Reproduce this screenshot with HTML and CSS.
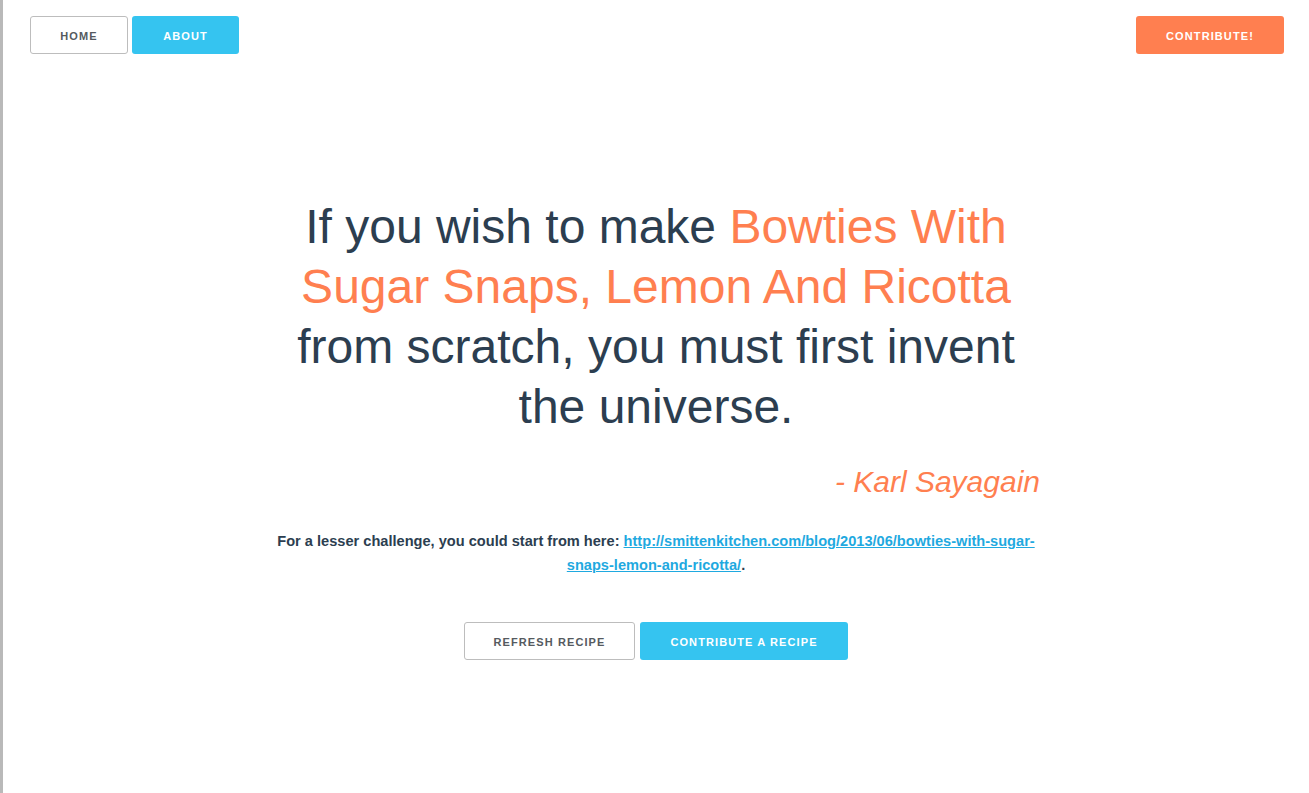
FILE: index.html
```html
<!DOCTYPE html>
<html>
<head>
<meta charset="utf-8">
<link rel="stylesheet" href="styles.css">
</head>
<body>
<nav class="nav">
  <div class="nav-left">
    <a class="btn btn-outline" href="#">Home</a>
    <a class="btn btn-blue" href="#">About</a>
  </div>
  <a class="btn btn-orange btn-contribute" href="#">Contribute!</a>
</nav>
<main class="main">
  <h1 class="quote">If you wish to make <span class="dish">Bowties With Sugar Snaps, Lemon And Ricotta</span> from scratch, you must first invent the universe.</h1>
  <p class="author">- Karl Sayagain</p>
  <p class="lesser">For a lesser challenge, you could start from here: <a href="#">http://smittenkitchen.com/blog/2013/06/bowties-with-sugar-snaps-lemon-and-ricotta/</a>.</p>
  <div class="actions">
    <a class="btn btn-outline btn-refresh" href="#">Refresh recipe</a>
    <a class="btn btn-blue btn-recipe" href="#">Contribute a recipe</a>
  </div>
</main>
</body>
</html>
```
FILE: styles.css
```css
html, body {
  margin: 0;
  padding: 0;
  height: 100%;
}
body {
  background: #fff;
  border-left: 3px solid #b9b9b9;
  box-sizing: border-box;
  font-family: "Liberation Sans", Arial, sans-serif;
  color: #2c3e50;
}
.nav {
  display: flex;
  justify-content: space-between;
  align-items: flex-start;
  padding: 16px 25px 0 27px;
}
.nav-left {
  display: flex;
  gap: 4px;
}
.btn {
  display: inline-flex;
  align-items: center;
  justify-content: center;
  box-sizing: border-box;
  height: 38px;
  padding-top: 2px;
  border-radius: 3px;
  font-size: 11px;
  font-weight: bold;
  letter-spacing: 1.1px;
  text-transform: uppercase;
  text-decoration: none;
}
.btn-outline {
  border: 1px solid #bdbdbd;
  color: #555a60;
  background: #fff;
}
.btn-blue {
  background: #35c4f0;
  color: #fff;
}
.btn-orange {
  background: #ff7f50;
  color: #fff;
}
.nav-left .btn-outline { width: 98px; }
.nav-left .btn-blue { width: 107px; }
.btn-contribute { width: 148px; }

.main {
  width: 768px;
  margin: 0 auto;
  text-align: center;
  padding-top: 143px;
}
.quote {
  margin: 0;
  font-size: 48px;
  font-weight: normal;
  line-height: 60px;
}
.dish {
  color: #ff7f50;
}
.author {
  margin: 25px 0 0;
  text-align: right;
  font-size: 30px;
  font-style: italic;
  color: #ff7f50;
  line-height: 40px;
}
.lesser {
  margin: 27px 0 0;
  font-size: 14.6px;
  font-weight: bold;
  line-height: 24px;
}
.lesser a {
  color: #1fa9e0;
}
.actions {
  display: flex;
  justify-content: center;
  gap: 5px;
  margin-top: 45px;
}
.btn-refresh { width: 171px; }
.btn-recipe { width: 208px; }
```
